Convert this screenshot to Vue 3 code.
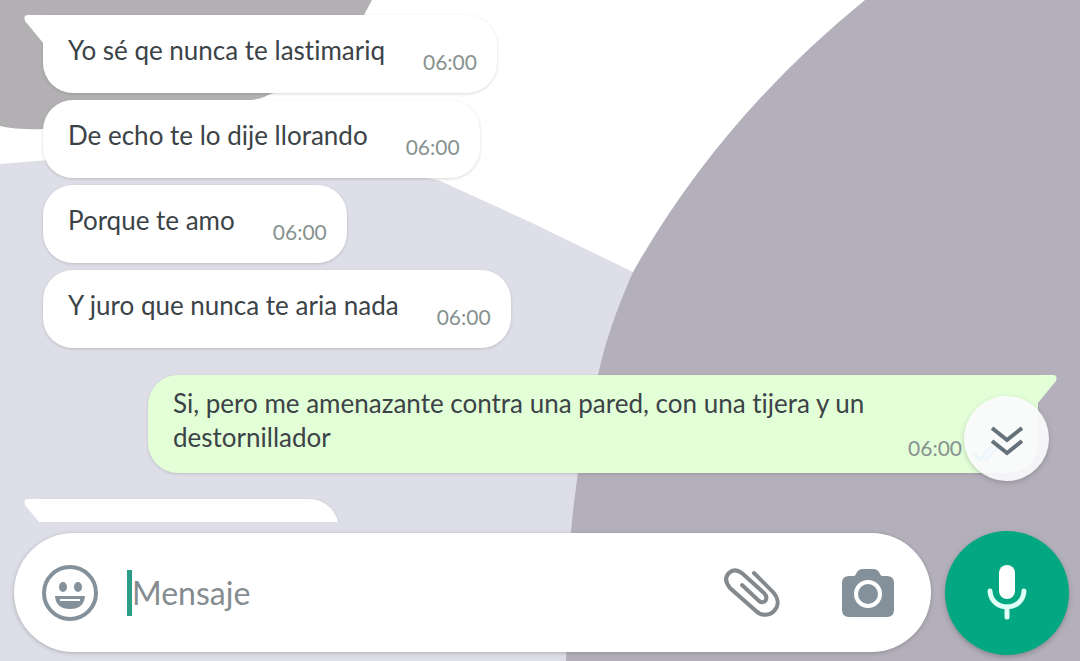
<script setup>
import { ref } from 'vue'

const draft = ref('')
const messages = [
  { id: 1, text: 'Yo sé qe nunca te lastimariq', time: '06:00', tail: true },
  { id: 2, text: 'De echo te lo dije llorando', time: '06:00' },
  { id: 3, text: 'Porque te amo', time: '06:00' },
  { id: 4, text: 'Y juro que nunca te aria nada', time: '06:00' },
  {
    id: 5,
    text: 'Si, pero me amenazante contra una pared, con una tijera y un destornillador',
    time: '06:00',
    tail: true,
    mine: true
  },
  { id: 6, tail: true }
]
</script>

<template>
  <div class="chat">
    <svg class="wallpaper" viewBox="0 0 1080 661" preserveAspectRatio="none" aria-hidden="true">
      <path fill="#b3b0b3" d="M0 0H372L364 15Q330 76 268 95Q262 99 250 100Q150 122 43 129Q18 130 0 126Z" />
      <path fill="#dedee8" d="M0 164Q240 142 438 180L530 222L633 272L640 661H0Z" />
      <path fill="#b4b0bb" d="M865 0Q720 118 633 272Q608 328 598 375Q578 450 571 532L566 661H1080V0Z" />
    </svg>

    <main class="messages">
      <article
        v-for="m in messages"
        :key="m.id"
        class="bubble"
        :class="{ mine: m.mine, tailed: m.tail, blank: !m.text }"
      >
        <svg v-if="m.tail" class="tail" viewBox="0 0 20 30" aria-hidden="true">
          <path d="M20 0H4Q-1 0 1 6L20 29Z" />
        </svg>
        <p v-if="m.text" class="text">{{ m.text }}</p>
        <time v-if="m.time" class="time">{{ m.time }}</time>
        <svg v-if="m.mine" class="ticks" viewBox="0 0 30 20" aria-hidden="true">
          <path d="M2 11l6 6L20 3M12 15l2 2L27 3" />
        </svg>
      </article>
      <button class="jump" type="button" aria-label="Ir al final">
        <svg viewBox="0 0 32 30" aria-hidden="true">
          <path d="M1 2l15 12L31 2M1 15l15 12L31 15" />
        </svg>
      </button>
    </main>

    <form class="composer" @submit.prevent>
      <div class="field">
        <button class="icon" type="button" aria-label="Emojis">
          <svg class="smile" viewBox="0 0 56 56" aria-hidden="true">
            <circle cx="28" cy="28" r="26" fill="none" stroke="#84919a" stroke-width="4" />
            <ellipse cx="21" cy="22" rx="4" ry="5" />
            <ellipse cx="36" cy="22" rx="4" ry="5" />
            <path d="M13 31H43Q42 44 28 44Q14 44 13 31Z" />
            <path d="M18 35H38" fill="none" stroke="#fff" stroke-width="2" />
          </svg>
        </button>
        <span class="caret"></span>
        <input v-model="draft" class="input" type="text" placeholder="Mensaje" aria-label="Mensaje" />
        <button class="icon clip-btn" type="button" aria-label="Adjuntar">
          <svg class="clip" viewBox="0 0 56 50" aria-hidden="true">
            <path d="M30 5L49 24C55 31 55 38 50 43C45 48 37 48 32 43L6 20C1 14 1 9 5 5C9 1 14 2 19 6L40 25C45 30 41 37 35 33L18 17" />
          </svg>
        </button>
        <button class="icon" type="button" aria-label="Cámara">
          <svg class="camera" viewBox="0 0 52 50" aria-hidden="true">
            <path d="M7 8H12Q14 7 15 4Q17 1 20 1H32Q35 1 37 4Q38 7 40 8H45Q52 8 52 15V42Q52 49 45 49H7Q0 49 0 42V15Q0 8 7 8Z" />
            <circle cx="26" cy="26" r="12" fill="none" stroke="#fff" stroke-width="4" />
          </svg>
        </button>
      </div>
      <button class="mic" type="button" aria-label="Grabar audio">
        <svg viewBox="0 0 40 56" aria-hidden="true">
          <rect x="12" y="0" width="16" height="34" rx="8" fill="#fff" />
          <path d="M3 26C4 47 36 47 37 26M20 42V52" fill="none" stroke="#e0fff6" stroke-width="5" stroke-linecap="round" />
        </svg>
      </button>
    </form>
  </div>
</template>

<style>
body {
  margin: 0;
}
</style>

<style scoped>
.chat {
  position: relative;
  display: flex;
  flex-direction: column;
  height: 100vh;
  overflow: hidden;
  background: #fff;
  font-family: Lato, "Liberation Sans", sans-serif;
  font-variant-ligatures: none;
  color: #3c4347;
}
.wallpaper {
  position: absolute;
  inset: 0;
  width: 100%;
  height: 100%;
}
.messages {
  position: relative;
  flex: 1;
  min-height: 0;
  overflow: hidden;
  box-sizing: border-box;
  display: flex;
  flex-direction: column;
  align-items: flex-start;
  gap: 7px;
  padding: 15px 42px 0 43px;
}
.bubble {
  position: relative;
  flex: none;
  box-sizing: border-box;
  display: flex;
  gap: 38px;
  min-height: 78px;
  padding: 18px 20px 0 25px;
  border-radius: 30px;
  background: #fff;
  box-shadow: 0 1px 3px rgba(60, 60, 60, 0.2);
}
.tailed {
  border-top-left-radius: 0;
}
.blank {
  width: 296px;
}
.mine {
  align-self: flex-end;
  width: calc(100% - 105px);
  min-height: 98px;
  margin: 20px 0 19px;
  padding: 11px 20px 0 25px;
  border-radius: 30px 0 30px 30px;
  background: #e3ffd8;
}
.tail {
  position: absolute;
  top: 0;
  left: -19px;
  width: 20px;
  height: 30px;
  fill: #fff;
}
.mine .tail {
  left: auto;
  right: -19px;
  transform: scaleX(-1);
  fill: #e3ffd8;
}
.text {
  margin: 0;
  font-size: 26px;
  line-height: 34px;
}
.time {
  padding-top: 14px;
  font-size: 21px;
  line-height: 30px;
  color: #87928f;
}
.mine .text {
  width: 720px;
}
.mine .time {
  position: absolute;
  right: 76px;
  bottom: 10px;
  padding: 0;
}
.ticks {
  position: absolute;
  right: 36px;
  bottom: 10px;
  width: 30px;
  height: 20px;
  fill: none;
  stroke: #53bdeb;
  stroke-width: 3px;
}
.jump {
  position: absolute;
  right: 31px;
  bottom: 41px;
  display: grid;
  place-items: center;
  width: 85px;
  height: 85px;
  padding: 5px 0 0;
  border: 0;
  border-radius: 50%;
  background: rgba(251, 251, 253, 0.92);
  box-shadow: 0 2px 5px rgba(60, 60, 60, 0.25);
}
.jump svg {
  width: 32px;
  height: 30px;
  fill: none;
  stroke: #65727b;
  stroke-width: 4px;
}
.composer {
  position: relative;
  display: flex;
  align-items: flex-end;
  gap: 14px;
  padding: 9px 11px 6px 14px;
}
.field {
  flex: 1;
  min-width: 0;
  box-sizing: border-box;
  display: flex;
  align-items: center;
  height: 119px;
  margin-bottom: 3px;
  padding: 0 37px 0 28px;
  border-radius: 60px;
  background: #fff;
  box-shadow: 0 1px 4px rgba(60, 60, 60, 0.3);
}
.icon {
  flex: none;
  display: flex;
  padding: 0;
  border: 0;
  background: none;
  fill: #84919a;
}
.smile {
  width: 56px;
  height: 56px;
}
.caret {
  flex: none;
  width: 5px;
  height: 46px;
  margin-left: 29px;
  background: #2b9c85;
}
.input {
  flex: 1;
  min-width: 0;
  padding: 0;
  border: 0;
  outline: 0;
  background: none;
  font: inherit;
  font-size: 32px;
}
.input::placeholder {
  color: #858c8f;
  opacity: 1;
}
.clip-btn {
  margin-right: 62px;
}
.clip {
  width: 56px;
  height: 50px;
  fill: none;
  stroke: #84898e;
  stroke-width: 4px;
  stroke-linecap: round;
}
.camera {
  width: 52px;
  height: 50px;
}
.mic {
  flex: none;
  display: grid;
  place-items: center;
  width: 124px;
  height: 124px;
  padding: 0;
  border: 0;
  border-radius: 50%;
  background: #03a883;
  box-shadow: 0 2px 5px rgba(60, 60, 60, 0.35);
}
.mic svg {
  width: 40px;
  height: 56px;
}
</style>
